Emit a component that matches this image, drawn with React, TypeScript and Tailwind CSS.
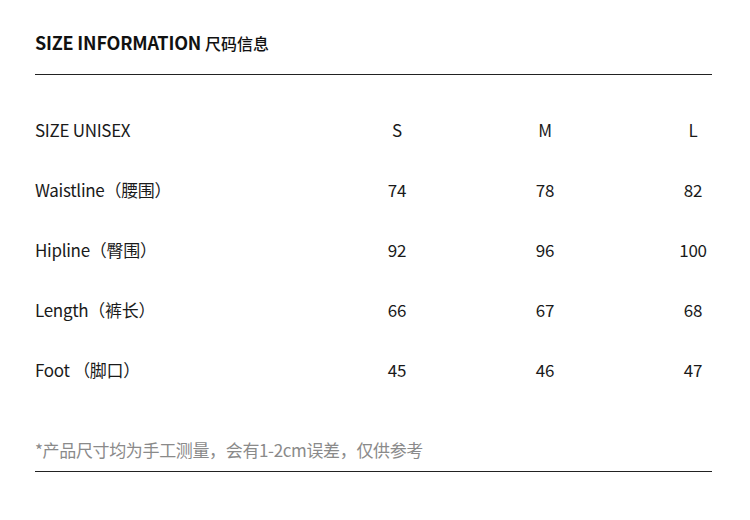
import React from "react";

const rows: [string, string, string, string][] = [
  ["Waistline（腰围）", "74", "78", "82"],
  ["Hipline（臀围）", "92", "96", "100"],
  ["Length（裤长）", "66", "67", "68"],
  ["Foot （脚口）", "45", "46", "47"],
];

export default function App() {
  return (
    <div
      className="w-[750px] h-[520px] overflow-hidden bg-white text-[#1a1a1a]"
      style={{ fontFamily: '"Noto Sans CJK SC", "Noto Sans", sans-serif' }}
    >
      <div className="px-[35px] pt-[30px]">
        <div className="h-[24px] leading-[24px] text-[18px] font-bold tracking-[-0.2px] text-[#111]">
          SIZE INFORMATION{" "}
          <span className="text-[16px] font-medium tracking-normal">尺码信息</span>
        </div>
        <div className="mt-[20px] w-[677px] border-t border-[#222]" />
        <div className="mt-[25px] w-[732px]">
          <div className="grid grid-cols-[288px_148px_148px_148px] h-[60px] items-center text-[17px] tracking-[-0.3px]">
            <div>SIZE UNISEX</div>
            <div className="text-center">S</div>
            <div className="text-center">M</div>
            <div className="text-center">L</div>
          </div>
          {rows.map((r) => (
            <div
              key={r[0]}
              className="grid grid-cols-[288px_148px_148px_148px] h-[60px] items-center text-[17px] tracking-[-0.3px]"
            >
              <div>{r[0]}</div>
              <div className="text-center">{r[1]}</div>
              <div className="text-center">{r[2]}</div>
              <div className="text-center">{r[3]}</div>
            </div>
          ))}
        </div>
        <div className="mt-[38px] h-[24px] leading-[24px] text-[17px] text-[#8a8a8a] tracking-[-0.35px]">
          *产品尺寸均为手工测量，会有1-2cm误差，仅供参考
        </div>
        <div className="mt-[9px] w-[677px] border-t border-[#222]" />
      </div>
    </div>
  );
}
